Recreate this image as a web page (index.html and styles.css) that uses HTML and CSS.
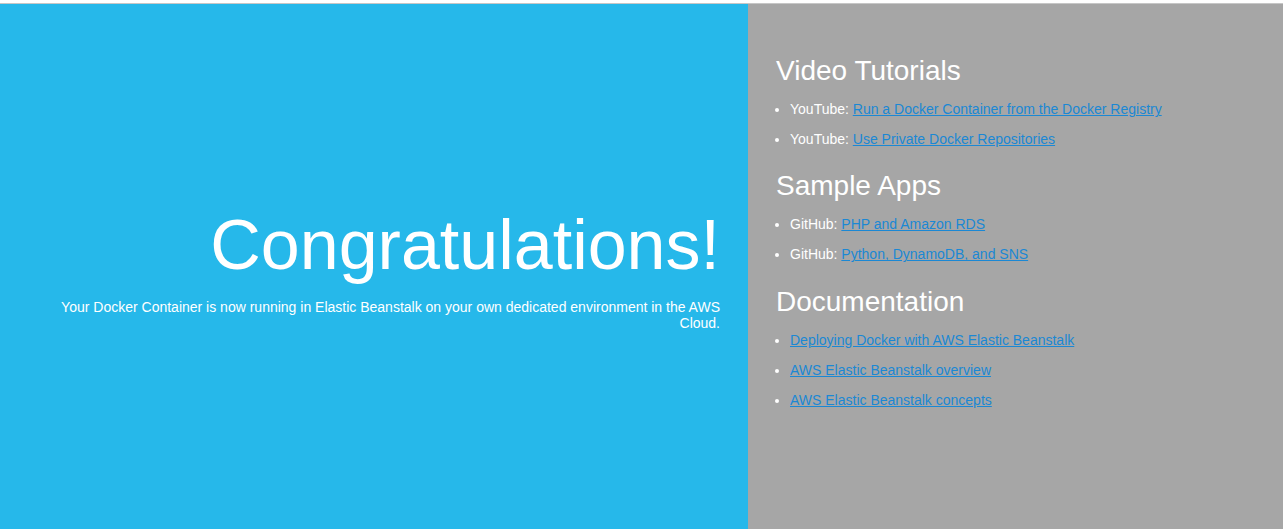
FILE: index.html
```html
<!DOCTYPE html>
<html>
<head>
<meta charset="utf-8">
<title>Welcome</title>
<link rel="stylesheet" href="styles.css">
</head>
<body>
<div class="page">
  <div class="textColumn">
    <h1>Congratulations!</h1>
    <p>Your Docker Container is now running in Elastic Beanstalk on your own dedicated environment in the AWS Cloud.</p>
  </div>
  <div class="linksColumn">
    <h2>Video Tutorials</h2>
    <ul>
      <li>YouTube: <a href="#">Run a Docker Container from the Docker Registry</a></li>
      <li>YouTube: <a href="#">Use Private Docker Repositories</a></li>
    </ul>
    <h2>Sample Apps</h2>
    <ul>
      <li>GitHub: <a href="#">PHP and Amazon RDS</a></li>
      <li>GitHub: <a href="#">Python, DynamoDB, and SNS</a></li>
    </ul>
    <h2>Documentation</h2>
    <ul>
      <li><a href="#">Deploying Docker with AWS Elastic Beanstalk</a></li>
      <li><a href="#">AWS Elastic Beanstalk overview</a></li>
      <li><a href="#">AWS Elastic Beanstalk concepts</a></li>
    </ul>
  </div>
</div>
</body>
</html>
```

FILE: styles.css
```css
html, body {
  margin: 0;
  padding: 0;
  height: 100%;
  background: #ffffff;
}
body {
  color: #ffffff;
  font-family: "Liberation Sans", Arial, sans-serif;
  font-size: 14px;
  padding-top: 3px;
  box-sizing: border-box;
}
.page {
  display: grid;
  grid-template-columns: 748px 1fr;
  height: 526px;
  border-top: 1px solid #c6c6c6;
  box-sizing: border-box;
}
.textColumn, .linksColumn {
  padding: 28px;
  box-sizing: border-box;
}
.textColumn {
  background: #26b8ea;
  text-align: right;
  padding-top: 154px;
}
.linksColumn {
  background: #a6a6a6;
}
h1 {
  font-size: 70px;
  font-weight: normal;
  margin: 0.67em 0 0;
}
.textColumn p {
  margin: 14px 0;
}
h2 {
  font-size: 28px;
  font-weight: normal;
  margin: 0.83em 0 0;
}
ul {
  padding-left: 14px;
  margin: 0;
}
li {
  margin: 14px 0;
}
a {
  color: #1b88d4;
}
```
